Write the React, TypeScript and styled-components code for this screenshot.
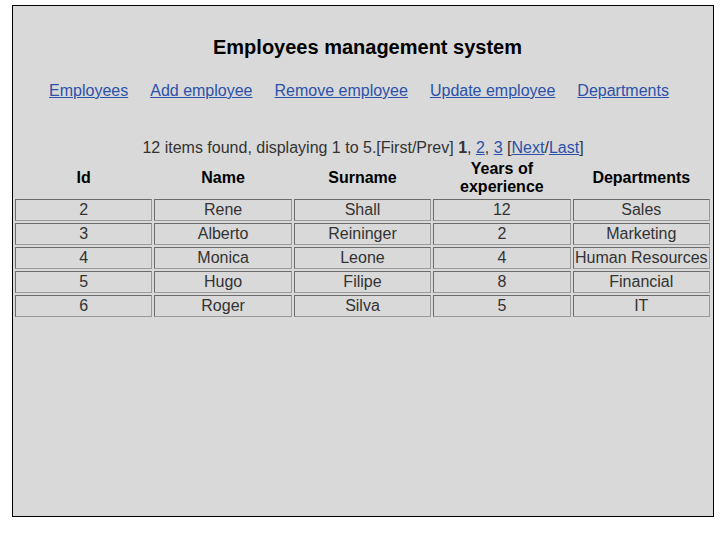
import React from 'react';
import styled, { createGlobalStyle } from 'styled-components';

interface Employee {
  id: number;
  name: string;
  surname: string;
  years: number;
  department: string;
}

const employees: Employee[] = [
  { id: 2, name: 'Rene', surname: 'Shall', years: 12, department: 'Sales' },
  { id: 3, name: 'Alberto', surname: 'Reininger', years: 2, department: 'Marketing' },
  { id: 4, name: 'Monica', surname: 'Leone', years: 4, department: 'Human Resources' },
  { id: 5, name: 'Hugo', surname: 'Filipe', years: 8, department: 'Financial' },
  { id: 6, name: 'Roger', surname: 'Silva', years: 5, department: 'IT' },
];

const navLinks = ['Employees', 'Add employee', 'Remove employee', 'Update employee', 'Departments'];

const GlobalStyle = createGlobalStyle`
  body {
    margin: 0;
    background: #fff;
    font-family: "Liberation Sans", Arial, sans-serif;
    color: #333;
  }
`;

const Page = styled.div`
  box-sizing: border-box;
  width: 702px;
  height: 512px;
  margin: 5px 0 0 12px;
  background: #d9d9d9;
  border: 1px solid #000;
  text-align: center;
`;

const Title = styled.h1`
  margin: 29px 0 0;
  padding-left: 9px;
  font-size: 20px;
  line-height: 24px;
  font-weight: bold;
  color: #000;
`;

const Nav = styled.nav`
  margin-top: 23px;
  padding-right: 8px;
  font-size: 16px;
  line-height: 18px;
`;

const Link = styled.a`
  color: #2b51aa;
  text-decoration: underline;
  cursor: pointer;
`;

const NavLink = styled(Link)`
  margin: 0 11px;
`;

const Pager = styled.div`
  margin-top: 39px;
  font-size: 16px;
  line-height: 18px;
`;

const Table = styled.table`
  width: 699px;
  margin: 0;
  table-layout: fixed;
  border-collapse: separate;
  border-spacing: 2px;
  font-size: 16px;
`;

const Th = styled.th`
  padding: 1px;
  line-height: 18px;
  font-weight: bold;
  color: #000;
`;

const Td = styled.td`
  padding: 1px 0;
  line-height: 18px;
  border: 1px solid #6b6b6b;
  border-right-color: #9a9a9a;
  border-bottom-color: #9a9a9a;
  white-space: nowrap;
`;

export default function App() {
  return (
    <>
      <GlobalStyle />
      <Page>
        <Title>Employees management system</Title>
        <Nav>
          {navLinks.map((l) => (
            <NavLink key={l}>{l}</NavLink>
          ))}
        </Nav>
        <Pager>
          12 items found, displaying 1 to 5.[First/Prev] <b>1</b>, <Link>2</Link>, <Link>3</Link> [
          <Link>Next</Link>/<Link>Last</Link>]
        </Pager>
        <Table>
          <thead>
            <tr>
              <Th>Id</Th>
              <Th>Name</Th>
              <Th>Surname</Th>
              <Th>
                Years of
                <br />
                experience
              </Th>
              <Th>Departments</Th>
            </tr>
          </thead>
          <tbody>
            {employees.map((e) => (
              <tr key={e.id}>
                <Td>{e.id}</Td>
                <Td>{e.name}</Td>
                <Td>{e.surname}</Td>
                <Td>{e.years}</Td>
                <Td>{e.department}</Td>
              </tr>
            ))}
          </tbody>
        </Table>
      </Page>
    </>
  );
}
